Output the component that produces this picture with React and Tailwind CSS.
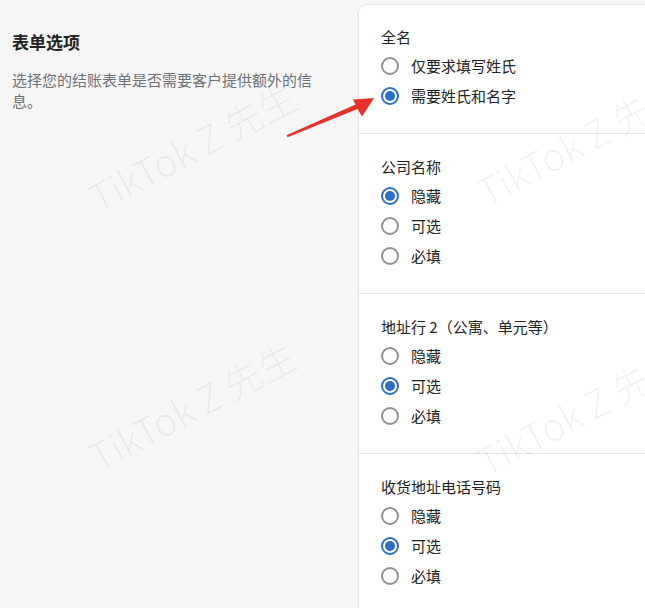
import React from "react";

const font = { fontFamily: '"Noto Sans CJK SC", "Noto Sans", sans-serif' };

function Radio({ checked, label }) {
  return (
    <div className="flex h-[30px] items-center gap-3">
      {checked ? (
        <span className="flex h-[18px] w-[18px] shrink-0 items-center justify-center rounded-full border-2 border-[#2c6ecb] bg-white">
          <span className="h-2.5 w-2.5 rounded-full bg-[#2c6ecb]" />
        </span>
      ) : (
        <span className="h-[18px] w-[18px] shrink-0 rounded-full border-2 border-[#8c9196] bg-white" />
      )}
      <span className="text-[15px] leading-5 text-[#202223]">{label}</span>
    </div>
  );
}

function Section({ title, options, selected, first, last }) {
  return (
    <div
      className={
        (first ? "pt-[22px] " : "pt-[23px] ") +
        "pb-[22px] pl-[22px] " +
        (last ? "" : "border-b border-[#e1e3e5]")
      }
    >
      <div className="h-5 text-[15px] leading-5 text-[#202223]">{title}</div>
      <div className="mt-1 flex flex-col">
        {options.map((o, i) => (
          <Radio key={o} label={o} checked={i === selected} />
        ))}
      </div>
    </div>
  );
}

function Watermark({ x, y }) {
  return (
    <span
      className="pointer-events-none absolute -translate-x-1/2 -translate-y-1/2 -rotate-[28deg] whitespace-nowrap text-[38px] font-light leading-none text-black/[0.06]"
      style={{ left: x, top: y }}
    >
      TikTok Z 先生
    </span>
  );
}

export default function App() {
  return (
    <div
      className="relative flex h-[608px] w-[645px] overflow-hidden bg-[#f6f6f7]"
      style={font}
    >
      <div className="w-[359px] shrink-0 pl-3 pt-[30px]">
        <h2 className="text-[17px] font-bold leading-6 text-[#202223]">表单选项</h2>
        <p className="mt-[15px] w-[308px] text-[15px] leading-[21px] text-[#6d7175]">
          选择您的结账表单是否需要客户提供额外的信息。
        </p>
      </div>
      <div className="mt-[5px] w-[320px] shrink-0 self-start rounded-lg bg-white shadow-[0_0_0_1px_rgba(63,63,68,0.05),0_1px_3px_0_rgba(63,63,68,0.15)]">
        <Section first title="全名" options={["仅要求填写姓氏", "需要姓氏和名字"]} selected={1} />
        <Section title="公司名称" options={["隐藏", "可选", "必填"]} selected={0} />
        <Section title="地址行 2（公寓、单元等）" options={["隐藏", "可选", "必填"]} selected={1} />
        <Section last title="收货地址电话号码" options={["隐藏", "可选", "必填"]} selected={1} />
      </div>

      <Watermark x={192} y={146} />
      <Watermark x={580} y={140} />
      <Watermark x={192} y={405} />
      <Watermark x={580} y={410} />

      <svg
        className="pointer-events-none absolute left-0 top-0"
        width="645"
        height="608"
        viewBox="0 0 645 608"
      >
        <polygon
          points="286.5,135.2 355.5,104.5 353,99.5 374,98 362,116.5 357.5,109 287.5,137.2"
          fill="#e8302a"
        />
      </svg>
    </div>
  );
}
